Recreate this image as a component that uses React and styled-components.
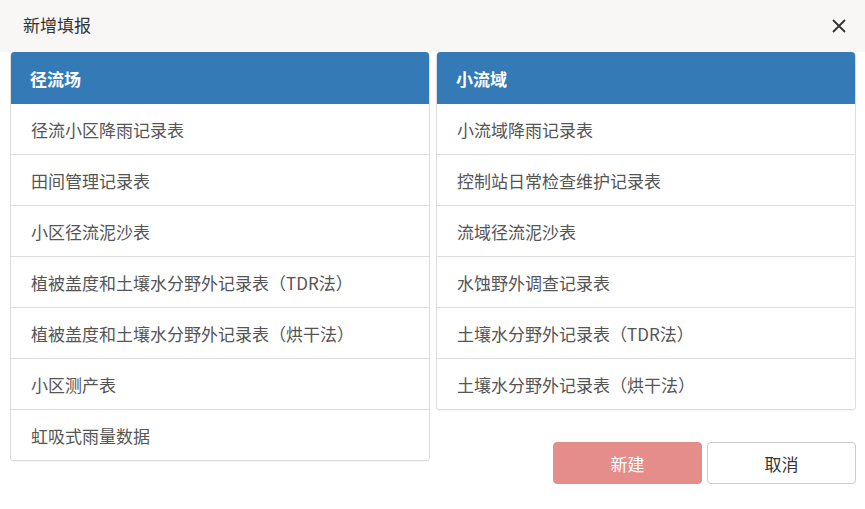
import React from "react";
import styled, { createGlobalStyle } from "styled-components";

const GlobalStyle = createGlobalStyle`
  html, body {
    margin: 0;
    padding: 0;
    background: #fff;
    font-family: "Noto Sans CJK SC", "Noto Sans", sans-serif;
  }
`;

const leftItems = [
  "径流小区降雨记录表",
  "田间管理记录表",
  "小区径流泥沙表",
  "植被盖度和土壤水分野外记录表（TDR法）",
  "植被盖度和土壤水分野外记录表（烘干法）",
  "小区测产表",
  "虹吸式雨量数据",
];

const rightItems = [
  "小流域降雨记录表",
  "控制站日常检查维护记录表",
  "流域径流泥沙表",
  "水蚀野外调查记录表",
  "土壤水分野外记录表（TDR法）",
  "土壤水分野外记录表（烘干法）",
];

const Dialog = styled.div`
  width: 865px;
  height: 509px;
  background: #fff;
  display: flex;
  flex-direction: column;
`;

const Header = styled.div`
  height: 52px;
  flex-shrink: 0;
  display: flex;
  align-items: center;
  justify-content: space-between;
  padding: 0 16px 0 23px;
  background: #f8f7f6;
  box-sizing: border-box;
`;

const Title = styled.span`
  font-size: 17px;
  color: #333;
  margin-top: -3px;
`;

const Close = styled.button`
  border: none;
  background: none;
  padding: 0;
  width: 20px;
  height: 20px;
  display: flex;
  align-items: center;
  justify-content: center;
  cursor: pointer;
`;

const Body = styled.div`
  display: flex;
  gap: 6px;
  padding: 0 9px 0 10px;
`;

const Column = styled.div`
  flex: 1;
  display: flex;
  flex-direction: column;
`;

const Panel = styled.div`
  border: 1px solid #ddd;
  border-top: none;
  border-radius: 4px;
  overflow: hidden;
  box-shadow: 0 1px 1px rgba(0, 0, 0, 0.05);
`;

const PanelHeading = styled.div`
  height: 52px;
  background: #337ab7;
  color: #fff;
  font-weight: bold;
  font-size: 17px;
  display: flex;
  align-items: center;
  padding-left: 20px;
  margin: 0 -1px;
  border-radius: 4px 4px 0 0;
`;

const Row = styled.div`
  height: 50px;
  display: flex;
  align-items: center;
  padding-left: 20px;
  font-size: 17px;
  color: #555;
  border-top: ${(p) => (p.first ? "none" : "1px solid #ddd")};
  background: #fff;
`;

const Actions = styled.div`
  display: flex;
  justify-content: flex-end;
  gap: 5px;
  margin-top: 32px;
`;

const Button = styled.button`
  width: 149px;
  height: 42px;
  border-radius: 4px;
  font-family: inherit;
  font-size: 17px;
  cursor: pointer;
  background: ${(p) => (p.primary ? "#e58d8b" : "#fff")};
  color: ${(p) => (p.primary ? "#fff" : "#333")};
  border: 1px solid ${(p) => (p.primary ? "#e58d8b" : "#ccc")};
`;

const Panelist = ({ title, items }) => (
  <Panel>
    <PanelHeading>{title}</PanelHeading>
    {items.map((t, i) => (
      <Row key={t} first={i === 0}>
        {t}
      </Row>
    ))}
  </Panel>
);

export default function App() {
  return (
    <>
      <GlobalStyle />
      <Dialog>
        <Header>
          <Title>新增填报</Title>
          <Close>
            <svg width="16" height="16" viewBox="0 0 16 16">
              <path d="M2 2L14 14M14 2L2 14" stroke="#333" strokeWidth="1.8" />
            </svg>
          </Close>
        </Header>
        <Body>
          <Column>
            <Panelist title="径流场" items={leftItems} />
          </Column>
          <Column>
            <Panelist title="小流域" items={rightItems} />
            <Actions>
              <Button primary>新建</Button>
              <Button>取消</Button>
            </Actions>
          </Column>
        </Body>
      </Dialog>
    </>
  );
}
